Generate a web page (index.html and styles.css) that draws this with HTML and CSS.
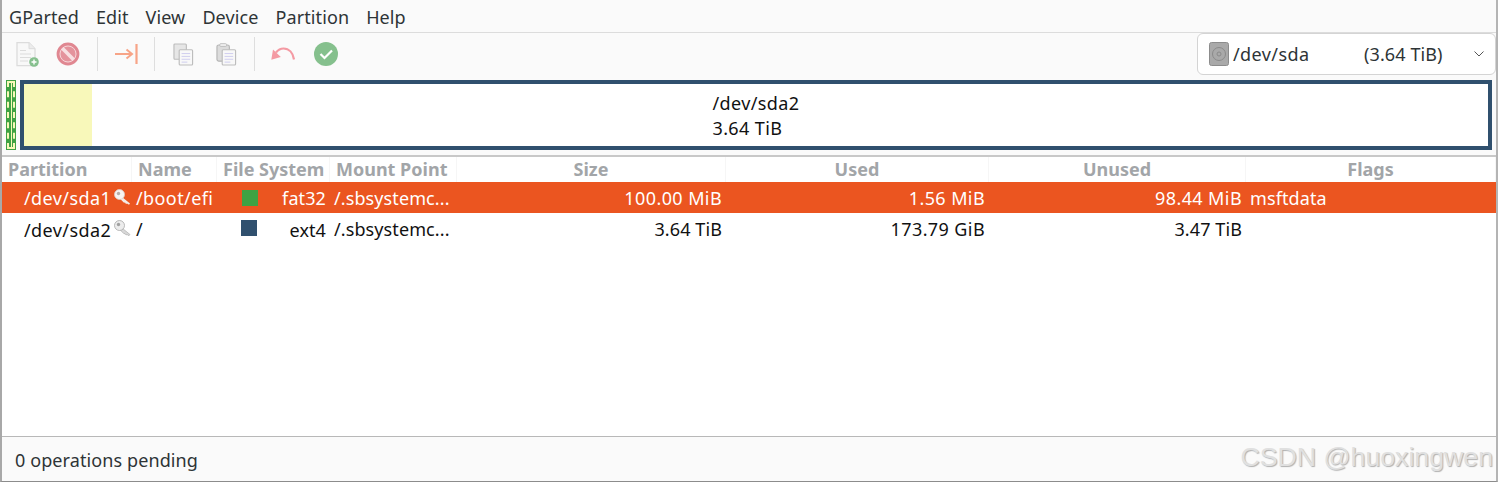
FILE: index.html
```html
<!DOCTYPE html>
<html lang="en">
<head>
  <meta charset="UTF-8">
  <title>GParted</title>
  <link rel="stylesheet" href="styles.css">
</head>
<body>
  <div class="window">
    <!-- Menu -->
    <div class="menubar">
      <span>GParted</span>
      <span>Edit</span>
      <span>View</span>
      <span>Device</span>
      <span>Partition</span>
      <span>Help</span>
    </div>

    <!-- Toolbar -->
    <div class="toolbar">
      <div class="tools">
        <svg class="tool first" viewBox="0 0 23 25">
          <path d="M1 0.700h12l6 6v17h-18z" fill="#f8f8f8" stroke="#dcdcdc" stroke-width="1.300"/>
          <path d="M13 0.700v6h6" fill="#ececec" stroke="#dcdcdc"/>
          <path d="M4 8.500h6M4 12h11M4 15.500h11M4 19h8" stroke="#dcdcdc" stroke-width="1.200"/>
          <circle cx="18" cy="20" r="4.800" fill="#86c08e"/>
          <path d="M15.500 20h5M18 17.500v5" stroke="#fff" stroke-width="1.400"/>
        </svg>
        <svg class="tool stop" viewBox="0 0 24 24">
          <circle cx="12" cy="12" r="10.200" fill="#e48f99" stroke="#e08791" stroke-width="2.400"/>
          <circle cx="12" cy="12" r="8" fill="#e4939c" stroke="#f5d5d8" stroke-width="1"/>
          <path d="M6.300 6.300l11.400 11.400" stroke="#f7e0e2" stroke-width="3.600"/>
        </svg>
        <i class="sep sep-a"></i>
        <svg class="tool apply-all" viewBox="0 0 24 20">
          <path d="M0 10h17M11.500 5.500l5.500 4.500-5.500 4.500" fill="none" stroke="#f7a487" stroke-width="2"/>
          <path d="M21.500 0v20" stroke="#f7a487" stroke-width="2.200"/>
        </svg>
        <i class="sep sep-b"></i>
        <svg class="tool copy" viewBox="0 0 22 24">
          <rect x="1" y="1" width="13" height="16" rx="1" fill="#e6e6e6" stroke="#bdbdbd" stroke-width="1.200"/>
          <rect x="6.500" y="7" width="14" height="16" rx="1" fill="#f8f8f8" stroke="#bdbdbd" stroke-width="1.200"/>
          <path d="M9 11h9M9 14h9M9 17h9M9 20h6" stroke="#cfcdee" stroke-width="1"/>
        </svg>
        <svg class="tool paste" viewBox="0 0 22 24">
          <rect x="1" y="2" width="13" height="17" rx="2" fill="#dcdcdc" stroke="#b5b5b5" stroke-width="1.200"/>
          <rect x="4" y="0.600" width="7" height="3" rx="1" fill="#eee" stroke="#b5b5b5" stroke-width="0.800"/>
          <rect x="6.500" y="7" width="14" height="16" rx="1" fill="#f8f8f8" stroke="#bdbdbd" stroke-width="1.200"/>
          <path d="M9 11h9M9 14h9M9 17h9M9 20h6" stroke="#cfcdee" stroke-width="1"/>
        </svg>
        <i class="sep sep-c"></i>
        <svg class="tool undo" viewBox="0 0 24 13">
          <path d="M23 12.500c-1-6.500-5-11-10.500-11-3 0-5.500 1.500-7.500 4" fill="none" stroke="#f49aa3" stroke-width="2.200"/>
          <path d="M0.300 12.800l1.700-10.300 7.800 7.500z" fill="#f49aa3"/>
        </svg>
        <svg class="tool apply" viewBox="0 0 24 24">
          <circle cx="12" cy="12" r="12" fill="#85c08d"/>
          <path d="M6.500 12l4 4 7.500-7.500" fill="none" stroke="#fff" stroke-width="2.200"/>
        </svg>
      </div>
      <div class="device-select">
        <svg class="disk" viewBox="0 0 20 24">
          <rect x="0.500" y="0.500" width="19" height="23" rx="2" fill="#a9a9a9" stroke="#8c8c8c"/>
          <circle cx="10" cy="12" r="6.500" fill="none" stroke="#8a8a8a"/>
          <circle cx="10" cy="12" r="2" fill="none" stroke="#8a8a8a"/>
        </svg>
        <span class="device-name wide">/dev/sda</span>
        <span class="device-size">(3.64 TiB)</span>
        <svg class="chevron" viewBox="0 0 10 6">
          <path d="M0.500 0.500l4.500 4.500 4.500-4.500" fill="none" stroke="#555" stroke-width="1"/>
        </svg>
      </div>
    </div>

    <!-- Disk graph -->
    <div class="graph">
      <div class="part-small"><div class="part-small-inner"></div></div>
      <div class="part-main">
        <div class="used-bar"></div>
        <div class="part-label wide">/dev/sda2<br>3.64 TiB</div>
      </div>
    </div>

    <!-- Partition list -->
    <div class="list">
      <div class="row head">
        <div>Partition</div>
        <div>Name</div>
        <div>File System</div>
        <div>Mount Point</div>
        <div>Size</div>
        <div>Used</div>
        <div>Unused</div>
        <div>Flags</div>
      </div>
      <div class="row selected">
        <div class="cell-part wide">/dev/sda1
          <svg class="key" viewBox="0 0 17 16">
            <path d="M8 8l8 6.500-1 1.200-2-1.200-1 .5-1-1.500-1 .3-3.500-3.500z" fill="#f4ece8"/>
            <circle cx="5.500" cy="5.500" r="5" fill="#f8f4f2" stroke="#d8cfca" stroke-width="0.800"/>
            <circle cx="4.500" cy="4.500" r="1.700" fill="#b5aeaa"/>
          </svg>
        </div>
        <div class="wide">/boot/efi</div>
        <div class="cell-fs"><i class="swatch fat32"></i><span>fat32</span></div>
        <div>/.sbsystemc...</div>
        <div class="num wide">100.00 MiB</div>
        <div class="num wide">1.56 MiB</div>
        <div class="num wide">98.44 MiB</div>
        <div>msftdata</div>
      </div>
      <div class="row">
        <div class="cell-part wide">/dev/sda2
          <svg class="key" viewBox="0 0 17 16">
            <path d="M8 8l8 6.500-1 1.200-2-1.200-1 .5-1-1.500-1 .3-3.500-3.500z" fill="#d8d8d8" stroke="#a8a8a8" stroke-width="0.600"/>
            <circle cx="5.500" cy="5.500" r="5" fill="#ececec" stroke="#a8a8a8" stroke-width="0.800"/>
            <circle cx="4.500" cy="4.500" r="1.700" fill="#a0a0a0"/>
          </svg>
        </div>
        <div>/</div>
        <div class="cell-fs"><i class="swatch ext4"></i><span>ext4</span></div>
        <div>/.sbsystemc...</div>
        <div class="num">3.64 TiB</div>
        <div class="num wide">173.79 GiB</div>
        <div class="num">3.47 TiB</div>
        <div></div>
      </div>
    </div>

    <div class="statusbar">0 operations pending</div>
    <div class="watermark">CSDN @huoxingwen</div>
  </div>
</body>
</html>
```

FILE: styles.css
```css
html, body {
  margin: 0;
  height: 100%;
  overflow: hidden;
}
body {
  font-family: "Noto Sans", sans-serif;
  font-size: 18px;
  letter-spacing: 0.1px;
  color: #2e3436;
  background: #fff;
}
.wide {
  letter-spacing: 0.4px;
}
.window {
  position: relative;
  display: flex;
  flex-direction: column;
  height: 482px;
  width: 1498px;
  box-sizing: border-box;
  background: #fafafa;
  border-left: 2px solid #a8a8a8;
  border-right: 2px solid #b4b4b4;
  border-bottom: 1px solid #8c8c8c;
}
.menubar {
  display: flex;
  gap: 17px;
  height: 32px;
  line-height: 34px;
  padding-left: 7px;
  border-bottom: 1px solid #dcdcdc;
  flex: none;
}
.toolbar {
  display: flex;
  justify-content: space-between;
  height: 47px;
  flex: none;
}
.tools {
  display: flex;
  align-items: center;
  height: 42px;
}
.tool {
  display: block;
  flex: none;
}
.first { width: 23px; height: 25px; margin-left: 14px; }
.stop { width: 24px; height: 24px; margin-left: 17px; }
.sep {
  display: block;
  width: 1px;
  height: 34px;
  background: #dedede;
}
.sep-a { margin-left: 17px; }
.apply-all { width: 24px; height: 20px; margin-left: 17px; }
.sep-b { margin-left: 15px; }
.copy { width: 21px; height: 23px; margin-left: 18px; }
.paste { width: 21px; height: 23px; margin-left: 22px; }
.sep-c { margin-left: 17px; }
.undo { width: 24px; height: 13px; margin-left: 16px; margin-top: -2px; }
.apply { width: 24px; height: 24px; margin-left: 19px; }
.device-select {
  display: flex;
  align-items: center;
  box-sizing: border-box;
  width: 299px;
  height: 42px;
  background: #fff;
  border: 1px solid #d4d4d4;
  border-radius: 6px;
  padding-left: 11px;
}
.disk { width: 20px; height: 24px; flex: none; }
.device-name { margin-left: 4px; width: 131px; }
.device-size { width: 110px; }
.chevron { width: 10px; height: 6px; flex: none; }
.graph {
  display: flex;
  gap: 4px;
  height: 70px;
  padding-left: 4px;
  padding-right: 4px;
  flex: none;
}
.part-small {
  box-sizing: border-box;
  width: 10px;
  background: #3fa243;
  padding: 1px;
}
.part-small-inner {
  height: 100%;
  box-sizing: border-box;
  border: 2px dashed #f8f8b8;
  background: linear-gradient(#f8f8b8, #f8f8b8) center / 1px 100% no-repeat;
}
.part-main {
  position: relative;
  flex: 1;
  box-sizing: border-box;
  display: flex;
  align-items: center;
  justify-content: center;
  background: #fff;
  border: 4px solid #30506e;
}
.used-bar {
  position: absolute;
  left: 0;
  top: 0;
  bottom: 0;
  width: 68px;
  background: #f8f8ba;
}
.part-label {
  color: #111;
  line-height: 25px;
  padding-top: 2px;
}
.list {
  flex: 1;
  margin-top: 5px;
  background: #fff;
  border-top: 2px solid #c8c8c8;
  border-bottom: 1px solid #b8b8b8;
}
.row {
  display: grid;
  grid-template-columns: 130px 85px 113px 127px 269px 263px 257px 1fr;
  height: 31px;
  line-height: 30px;
  color: #111;
  white-space: nowrap;
  margin-bottom: 1px;
}
.row > div {
  box-sizing: border-box;
  padding-left: 4px;
}
.head {
  height: 25px;
  line-height: 24px;
  margin-bottom: 0;
  font-weight: 700;
  letter-spacing: 0;
  color: #a2a5a8;
}
.row.head > div {
  border-right: 1px solid #f6f6f6;
  padding-left: 6px;
}
.row.head > div:nth-child(n+5) {
  padding-left: 0;
  text-align: center;
}
.selected {
  background: #eb5520;
  color: #fff;
  line-height: 32px;
}
.row > .cell-part {
  padding-left: 22px;
  display: flex;
  align-items: center;
}
.key {
  width: 17px;
  height: 16px;
  margin: -3px 0 0 3px;
  flex: none;
}
.row > .cell-fs {
  display: flex;
  align-items: center;
  justify-content: space-between;
  padding-left: 25px;
  padding-right: 4px;
}
.swatch {
  display: block;
  width: 16px;
  height: 16px;
}
.fat32 { background: #3fa243; }
.ext4 { background: #30506e; margin: -3px 0 0 -1px; }
.row > .num {
  text-align: right;
  padding-right: 4px;
}
.statusbar {
  height: 44px;
  line-height: 46px;
  padding-left: 13px;
  flex: none;
}
.watermark {
  position: absolute;
  right: 3px;
  bottom: 8px;
  font-family: "Liberation Sans", sans-serif;
  font-size: 26.7px;
  letter-spacing: 0;
  line-height: 32px;
  color: #e0e0e0;
  text-shadow: 1px 1px 1px #b0b0b0;
}
```
